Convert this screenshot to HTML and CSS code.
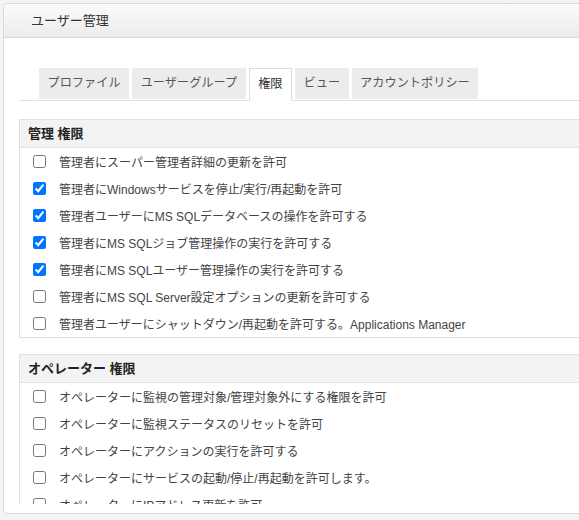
FILE: index.html
```html
<!DOCTYPE html>
<html lang="ja">
<head>
    <meta charset="UTF-8">
    <meta name="viewport" content="width=device-width, initial-scale=1.0">
    <title>ユーザー管理</title>
    <link rel="stylesheet" href="styles.css">
</head>
<body>
    <div class="dialog">
        <!-- Title Bar -->
        <div class="dialog-header">ユーザー管理</div>

        <!-- Scrollable Body -->
        <div class="dialog-body">
            <div class="tabs">
                <div class="tab">プロファイル</div>
                <div class="tab">ユーザーグループ</div>
                <div class="tab active">権限</div>
                <div class="tab">ビュー</div>
                <div class="tab">アカウントポリシー</div>
            </div>

            <!-- Admin Permissions -->
            <div class="perm-box">
                <div class="perm-title">管理 権限</div>
                <label class="perm-row"><input type="checkbox"><span>管理者にスーパー管理者詳細の更新を許可</span></label>
                <label class="perm-row"><input type="checkbox" checked><span>管理者にWindowsサービスを停止/実行/再起動を許可</span></label>
                <label class="perm-row"><input type="checkbox" checked><span>管理者ユーザーにMS SQLデータベースの操作を許可する</span></label>
                <label class="perm-row"><input type="checkbox" checked><span>管理者にMS SQLジョブ管理操作の実行を許可する</span></label>
                <label class="perm-row"><input type="checkbox" checked><span>管理者にMS SQLユーザー管理操作の実行を許可する</span></label>
                <label class="perm-row"><input type="checkbox"><span>管理者にMS SQL Server設定オプションの更新を許可する</span></label>
                <label class="perm-row"><input type="checkbox"><span>管理者ユーザーにシャットダウン/再起動を許可する。Applications Manager</span></label>
            </div>

            <!-- Operator Permissions -->
            <div class="perm-box">
                <div class="perm-title">オペレーター 権限</div>
                <label class="perm-row"><input type="checkbox"><span>オペレーターに監視の管理対象/管理対象外にする権限を許可</span></label>
                <label class="perm-row"><input type="checkbox"><span>オペレーターに監視ステータスのリセットを許可</span></label>
                <label class="perm-row"><input type="checkbox"><span>オペレーターにアクションの実行を許可する</span></label>
                <label class="perm-row"><input type="checkbox"><span>オペレーターにサービスの起動/停止/再起動を許可します。</span></label>
                <label class="perm-row"><input type="checkbox"><span>オペレーターにIPアドレス更新を許可</span></label>
            </div>
        </div>
    </div>
</body>
</html>
```

FILE: styles.css
```css
/* Page */
body {
    margin: 0;
    background-color: #f4f4f4;
    font-family: "Liberation Sans", "Noto Sans CJK JP", sans-serif;
    color: #444;
    overflow: hidden;
}

/* Dialog Panel */
.dialog {
    margin: 3px 0 0 3px;
    width: 700px;
    height: 509px;
    background-color: #fff;
    border: 1px solid #d9d9d9;
    border-radius: 4px;
    display: flex;
    flex-direction: column;
}

.dialog-header {
    height: 33px;
    line-height: 33px;
    padding-left: 27px;
    font-size: 13px;
    color: #333;
    background: linear-gradient(#fbfbfb, #ececec);
    border-bottom: 1px solid #d6d6d6;
    border-radius: 4px 4px 0 0;
}

.dialog-body {
    height: 436px;
    padding: 30px 0 0 15px;
    overflow: hidden;
}

/* Tabs */
.tabs {
    display: flex;
    padding-left: 20px;
    border-bottom: 1px solid #e2e2e2;
    margin-bottom: 18px;
}

.tab {
    height: 31px;
    line-height: 31px;
    padding: 0 8.5px;
    margin-right: 3px;
    font-size: 12.2px;
    color: #555;
    background-color: #ececec;
}

.tab.active {
    margin-bottom: -1px;
    color: #333;
    background-color: #fff;
    border: 1px solid #dcdcdc;
    border-bottom: 1px solid #fff;
}

/* Permission Boxes */
.perm-box {
    border: 1px solid #e0e0e0;
    margin-bottom: 16px;
}

.perm-title {
    height: 27px;
    line-height: 27px;
    padding-left: 8px;
    font-size: 13px;
    font-weight: bold;
    color: #222;
    background-color: #f3f3f3;
    border-bottom: 1px solid #e3e3e3;
}

.perm-row {
    display: flex;
    align-items: center;
    height: 27px;
    padding-left: 13px;
    font-size: 12px;
    color: #444;
}

.perm-row input {
    margin: 0 13px 0 0;
    width: 13px;
    height: 13px;
}
```
